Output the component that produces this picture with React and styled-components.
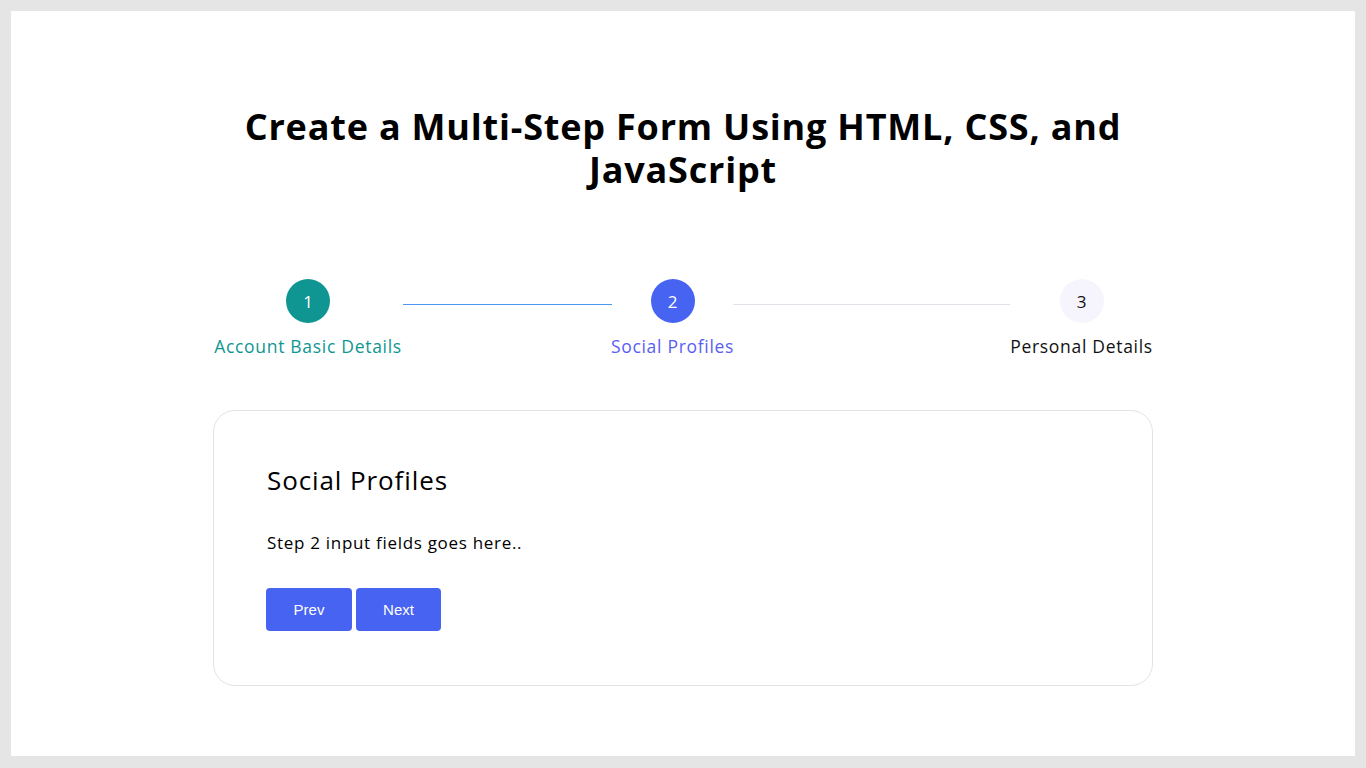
import React from "react";
import styled, { createGlobalStyle } from "styled-components";

const GlobalStyle = createGlobalStyle`
  html, body {
    margin: 0;
    padding: 0;
    background: #e5e5e5;
  }
  body {
    padding: 11px 11px 12px;
    font-family: "Open Sans", "Liberation Sans", sans-serif;
    color: #000;
  }
`;

const Page = styled.main`
  background: #fff;
  min-height: 745px;
  box-sizing: border-box;
  padding: 94px 0 0;
  display: flex;
  flex-direction: column;
  align-items: center;
`;

const Title = styled.h1`
  margin: 0;
  width: 940px;
  font-size: 36px;
  line-height: 43px;
  font-weight: 700;
  letter-spacing: 0.8px;
  text-align: center;
`;

const Stepper = styled.div`
  margin-top: 88px;
  width: 940px;
  display: grid;
  grid-template-columns: 190px 209px 121px 277px 143px;
  align-items: start;
`;

const Step = styled.div`
  display: flex;
  flex-direction: column;
  align-items: center;
  gap: 13px;
`;

const Circle = styled.div`
  width: 44px;
  height: 44px;
  border-radius: 50%;
  display: flex;
  align-items: center;
  justify-content: center;
  font-size: 17px;
  background: ${(p) => p.$bg};
  color: ${(p) => p.$fg};
`;

const Label = styled.span`
  font-size: 17.5px;
  line-height: 20px;
  letter-spacing: 0.7px;
  white-space: nowrap;
  color: ${(p) => p.$color};
`;

const Line = styled.div`
  margin-top: 25px;
  height: 1px;
  background: ${(p) => p.$color};
`;

const Card = styled.section`
  margin-top: 54px;
  width: 940px;
  box-sizing: border-box;
  border: 1px solid #e3e3e3;
  border-radius: 22px;
  padding: 52px 53px 54px 52px;
`;

const CardTitle = styled.h2`
  margin: 0 0 0 1px;
  font-size: 26px;
  line-height: 34px;
  font-weight: 400;
  letter-spacing: 0.9px;
`;

const CardText = styled.p`
  margin: 36px 0 0 1px;
  font-size: 17px;
  line-height: 20px;
  letter-spacing: 0.7px;
`;

const Actions = styled.div`
  margin-top: 35px;
  display: flex;
  gap: 4px;
`;

const Button = styled.button`
  width: ${(p) => p.$w}px;
  height: 43px;
  border: none;
  border-radius: 4px;
  background: #4763f1;
  color: #fff;
  font-family: "Liberation Sans", Arial, sans-serif;
  font-size: 15px;
  cursor: pointer;
`;

const steps = [
  { n: 1, label: "Account Basic Details", bg: "#109692", fg: "#fff", color: "#109692" },
  { n: 2, label: "Social Profiles", bg: "#4763f1", fg: "#fff", color: "#5a5ef2" },
  { n: 3, label: "Personal Details", bg: "#f6f5fe", fg: "#111", color: "#111" },
];

const lines = ["#4a98f0", "#e1e1ea"];

const App = () => {
  return (
    <>
      <GlobalStyle />
      <Page>
        <Title>
          Create a Multi-Step Form Using HTML, CSS, and
          <br />
          JavaScript
        </Title>
        <Stepper>
          {steps.map((s, i) => (
            <React.Fragment key={s.n}>
              <Step>
                <Circle $bg={s.bg} $fg={s.fg}>{s.n}</Circle>
                <Label $color={s.color}>{s.label}</Label>
              </Step>
              {i < lines.length && <Line $color={lines[i]} />}
            </React.Fragment>
          ))}
        </Stepper>
        <Card>
          <CardTitle>Social Profiles</CardTitle>
          <CardText>Step 2 input fields goes here..</CardText>
          <Actions>
            <Button $w={86}>Prev</Button>
            <Button $w={85}>Next</Button>
          </Actions>
        </Card>
      </Page>
    </>
  );
};

export default App;
